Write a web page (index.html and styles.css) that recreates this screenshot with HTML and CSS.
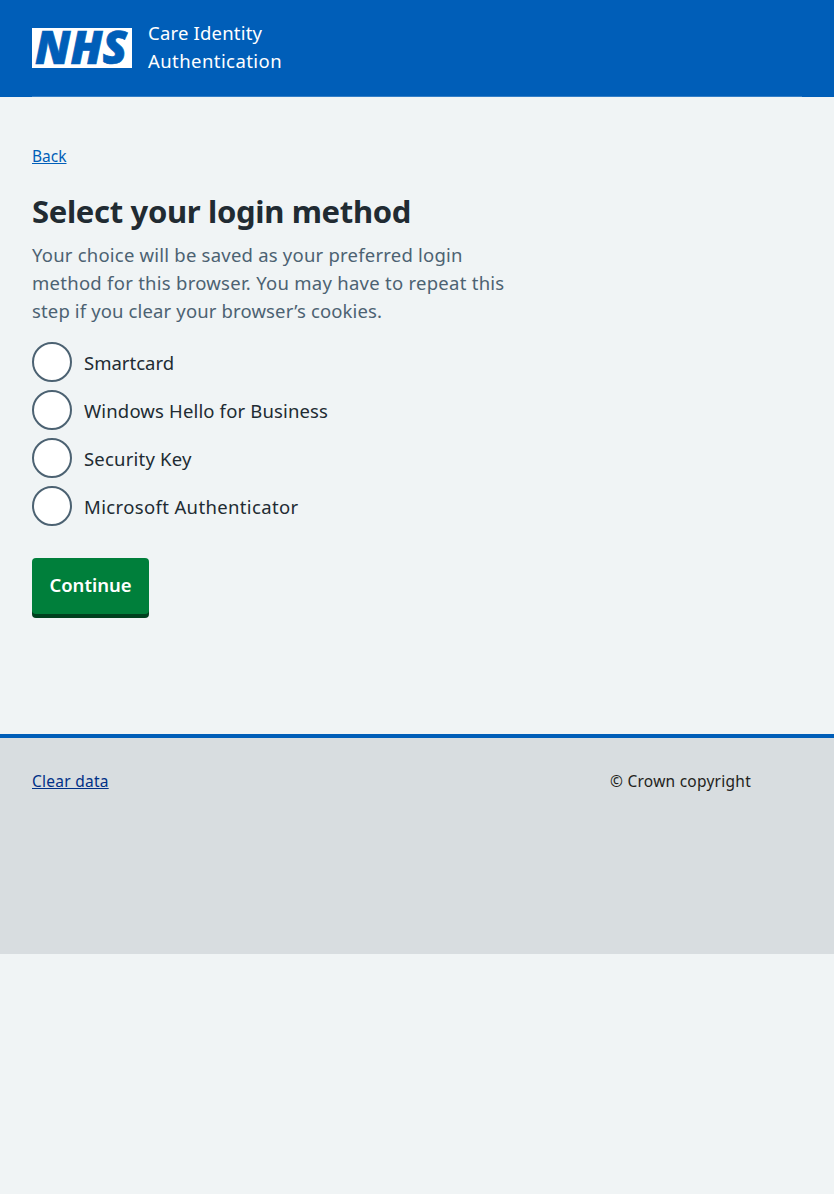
FILE: index.html
```html
<!DOCTYPE html>
<html lang="en">
<head>
<meta charset="utf-8">
<title>Select your login method</title>
<link rel="stylesheet" href="styles.css">
</head>
<body>
<header class="header">
  <div class="header-inner">
    <svg class="logo" viewBox="0 0 100 40" role="img" aria-label="NHS">
      <rect width="100" height="40" fill="#fff"/>
      <text class="logo-text" x="3" y="36"><tspan textLength="92" lengthAdjust="spacingAndGlyphs">NHS</tspan></text>
    </svg>
    <div class="service"><span class="service-a">Care Identity</span><br><span class="service-b">Authentication</span></div>
  </div>
</header>
<main class="main">
  <a class="back" href="#">Back</a>
  <h1 class="title">Select your login method</h1>
  <p class="hint"><span class="hint-a">Your choice will be saved as your preferred login</span><br><span class="hint-b">method for this browser. You may have to repeat this</span><br><span class="hint-c">step if you clear your browser’s cookies.</span></p>
  <form class="form">
    <label class="radio"><input class="dot" type="radio" name="m"><span class="opt-a">Smartcard</span></label>
    <label class="radio"><input class="dot" type="radio" name="m"><span class="opt-b">Windows Hello for Business</span></label>
    <label class="radio"><input class="dot" type="radio" name="m"><span class="opt-c">Security Key</span></label>
    <label class="radio"><input class="dot" type="radio" name="m"><span class="opt-d">Microsoft Authenticator</span></label>
    <button class="button" type="button">Continue</button>
  </form>
</main>
<footer class="footer">
  <a class="clear" href="#">Clear data</a>
  <span class="copyright">© Crown copyright</span>
</footer>
</body>
</html>
```
FILE: styles.css
```css
* { box-sizing: border-box; }
body { margin: 0; background: #f0f4f5; color: #212b32; font: 400 18.5px/28px "Noto Sans", "Open Sans", sans-serif; }
.header { height: 97px; padding: 0 32px; background: #005eb8; color: #fff; }
.header-inner { display: flex; height: 97px; padding-top: 19px; border-bottom: 1px solid #337ec6; }
.logo { width: 100px; height: 40px; margin: 9px 16px 0 0; overflow: visible; }
.logo-text { font: italic 800 45.5px/1 "Open Sans", sans-serif; fill: #005eb8; stroke: #005eb8; stroke-width: .7px; }
.service-a { letter-spacing: .19px; }
.service-b { letter-spacing: .43px; }
.main { display: flex; flex-direction: column; align-items: flex-start; height: 637px; padding: 47px 32px 0; }
.back { font-size: 15.5px; line-height: 24px; color: #005eb8; text-underline-offset: 1px; text-decoration-thickness: 1px; }
.title { margin: 23px 0 10px; font-size: 31px; line-height: 40px; font-weight: 700; letter-spacing: -.33px; }
.hint { margin: 0 0 17px; color: #4c6272; white-space: nowrap; }
.hint-a { letter-spacing: .215px; }
.hint-b { letter-spacing: .265px; }
.hint-c { letter-spacing: .135px; }
.radio { display: flex; width: max-content; height: 40px; margin-bottom: 8px; line-height: 42px; }
.opt-b { letter-spacing: .15px; }
.opt-c { letter-spacing: .2px; }
.opt-d { letter-spacing: .36px; }
.dot { appearance: none; width: 40px; height: 40px; margin: 0 12px 0 0; border: 2px solid #4c6272; border-radius: 50%; background: #fff; }
.button { display: block; width: 117px; height: 56px; margin-top: 32px; padding: 0 0 2px; border: 0; border-radius: 4px; background: #007f3b; box-shadow: 0 4px 0 #00401e; color: #fff; font: 600 18.5px/28px "Noto Sans", sans-serif; }
.footer { display: grid; grid-template-columns: 578px 1fr; height: 220px; padding: 31px 32px 0; border-top: 4px solid #005eb8; background: #d8dde0; font-size: 15.5px; line-height: 24px; letter-spacing: .25px; }
.clear { justify-self: start; color: #003087; text-underline-offset: 1px; text-decoration-thickness: 1px; }
.copyright { color: #231f20; }
```
